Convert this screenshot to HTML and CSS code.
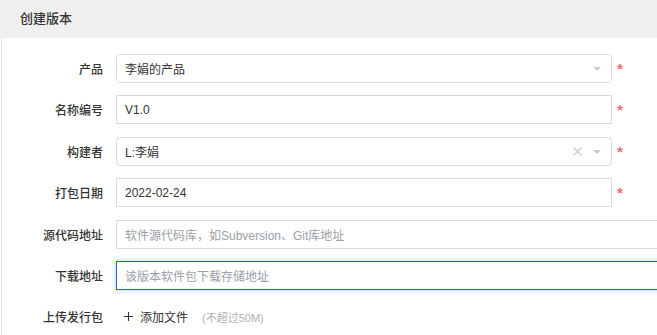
FILE: index.html
```html
<!DOCTYPE html>
<html lang="zh-CN">
<head>
<meta charset="utf-8">
<title>创建版本</title>
<link rel="stylesheet" href="styles.css">
</head>
<body>
<div class="panel">
  <div class="panel-head">创建版本</div>
  <div class="panel-body">
    <div class="form">
      <div class="row">
        <label class="lbl">产品</label>
        <div class="ctrl">
          <div class="field select">
            <span class="val">李娟的产品</span>
            <span class="arrow"></span>
          </div>
          <span class="req">*</span>
        </div>
      </div>
      <div class="row">
        <label class="lbl">名称编号</label>
        <div class="ctrl">
          <div class="field text"><span class="val">V1.0</span></div>
          <span class="req">*</span>
        </div>
      </div>
      <div class="row">
        <label class="lbl">构建者</label>
        <div class="ctrl">
          <div class="field select">
            <span class="val">L:李娟</span>
            <svg class="clear" width="9" height="9" viewBox="0 0 9 9"><path d="M0.5 0.5 L8.5 8.5 M8.5 0.5 L0.5 8.5" stroke="#c8c8c8" stroke-width="1.1" fill="none"/></svg>
            <span class="arrow"></span>
          </div>
          <span class="req">*</span>
        </div>
      </div>
      <div class="row">
        <label class="lbl">打包日期</label>
        <div class="ctrl">
          <div class="field text"><span class="val">2022-02-24</span></div>
          <span class="req">*</span>
        </div>
      </div>
      <div class="row">
        <label class="lbl">源代码地址</label>
        <div class="ctrl">
          <div class="field text wide"><span class="ph">软件源代码库，如Subversion、Git库地址</span></div>
        </div>
      </div>
      <div class="row">
        <label class="lbl">下载地址</label>
        <div class="ctrl">
          <div class="field text wide focus"><span class="ph">该版本软件包下载存储地址</span></div>
        </div>
      </div>
      <div class="row">
        <label class="lbl">上传发行包</label>
        <div class="ctrl">
          <span class="add">
            <svg class="plus" width="9" height="9" viewBox="0 0 9 9"><path d="M4.5 0 V9 M0 4.5 H9" stroke="#333" stroke-width="1.1" fill="none"/></svg>
            <span>添加文件</span>
          </span>
          <span class="hint">(不超过50M)</span>
        </div>
      </div>
    </div>
  </div>
</div>
</body>
</html>
```
FILE: styles.css
```css
html, body {
  margin: 0;
  padding: 0;
  background: #fff;
  overflow: hidden;
}
body {
  width: 657px;
  height: 335px;
  font-family: "Liberation Sans", "Noto Sans CJK SC", sans-serif;
  color: #333;
  font-size: 12px;
}
.panel {
  width: 100%;
  height: 100%;
}
.panel-head {
  height: 38px;
  background: #f0f0f0;
  box-sizing: border-box;
  padding-left: 20px;
  display: flex;
  align-items: center;
  font-size: 13px;
  font-weight: 500;
  color: #333;
  padding-bottom: 3px;
}
.panel-body {
  margin-left: 1px;
  border-left: 1px solid #e6e6e6;
  height: calc(100% - 38px);
  box-sizing: border-box;
  padding-top: 16px;
}
.form {
  display: flex;
  flex-direction: column;
  gap: 12.4px;
}
.row {
  display: flex;
  align-items: center;
  height: 29px;
  gap: 13px;
}
.lbl {
  width: 101px;
  flex: none;
  text-align: right;
  font-weight: 500;
  color: #333;
  font-size: 12px;
}
.ctrl {
  display: flex;
  align-items: center;
  flex: none;
}
.field {
  box-sizing: border-box;
  width: 496px;
  height: 29px;
  border: 1px solid #dcdcdc;
  background: #fff;
  display: flex;
  align-items: center;
  padding: 0 8px;
  font-size: 12px;
  color: #333;
}
.select {
  border-radius: 4px;
}
.field .val {
  flex: 1;
}
.wide {
  width: 560px;
}
.focus {
  border-color: #1c63d5;
  box-shadow: 0 0 4px 1px rgba(40, 110, 230, 0.25);
}
.ph {
  color: #9aa0a8;
}
.arrow {
  width: 0;
  height: 0;
  border-left: 4px solid transparent;
  border-right: 4px solid transparent;
  border-top: 4px solid #c8ccd4;
  margin-right: 2px;
  margin-top: 1px;
}
.clear {
  margin-right: 11px;
}
.req {
  color: #f56c6c;
  font-size: 15px;
  font-weight: bold;
  margin-left: 5px;
  align-self: flex-start;
  margin-top: 7px;
  line-height: 1;
}
.add {
  display: flex;
  align-items: center;
  margin-left: 8px;
  font-size: 12px;
  color: #333;
}
.plus {
  margin-right: 7px;
}
.hint {
  margin-left: 14px;
  font-size: 11px;
  color: #b0b0b0;
}
```
